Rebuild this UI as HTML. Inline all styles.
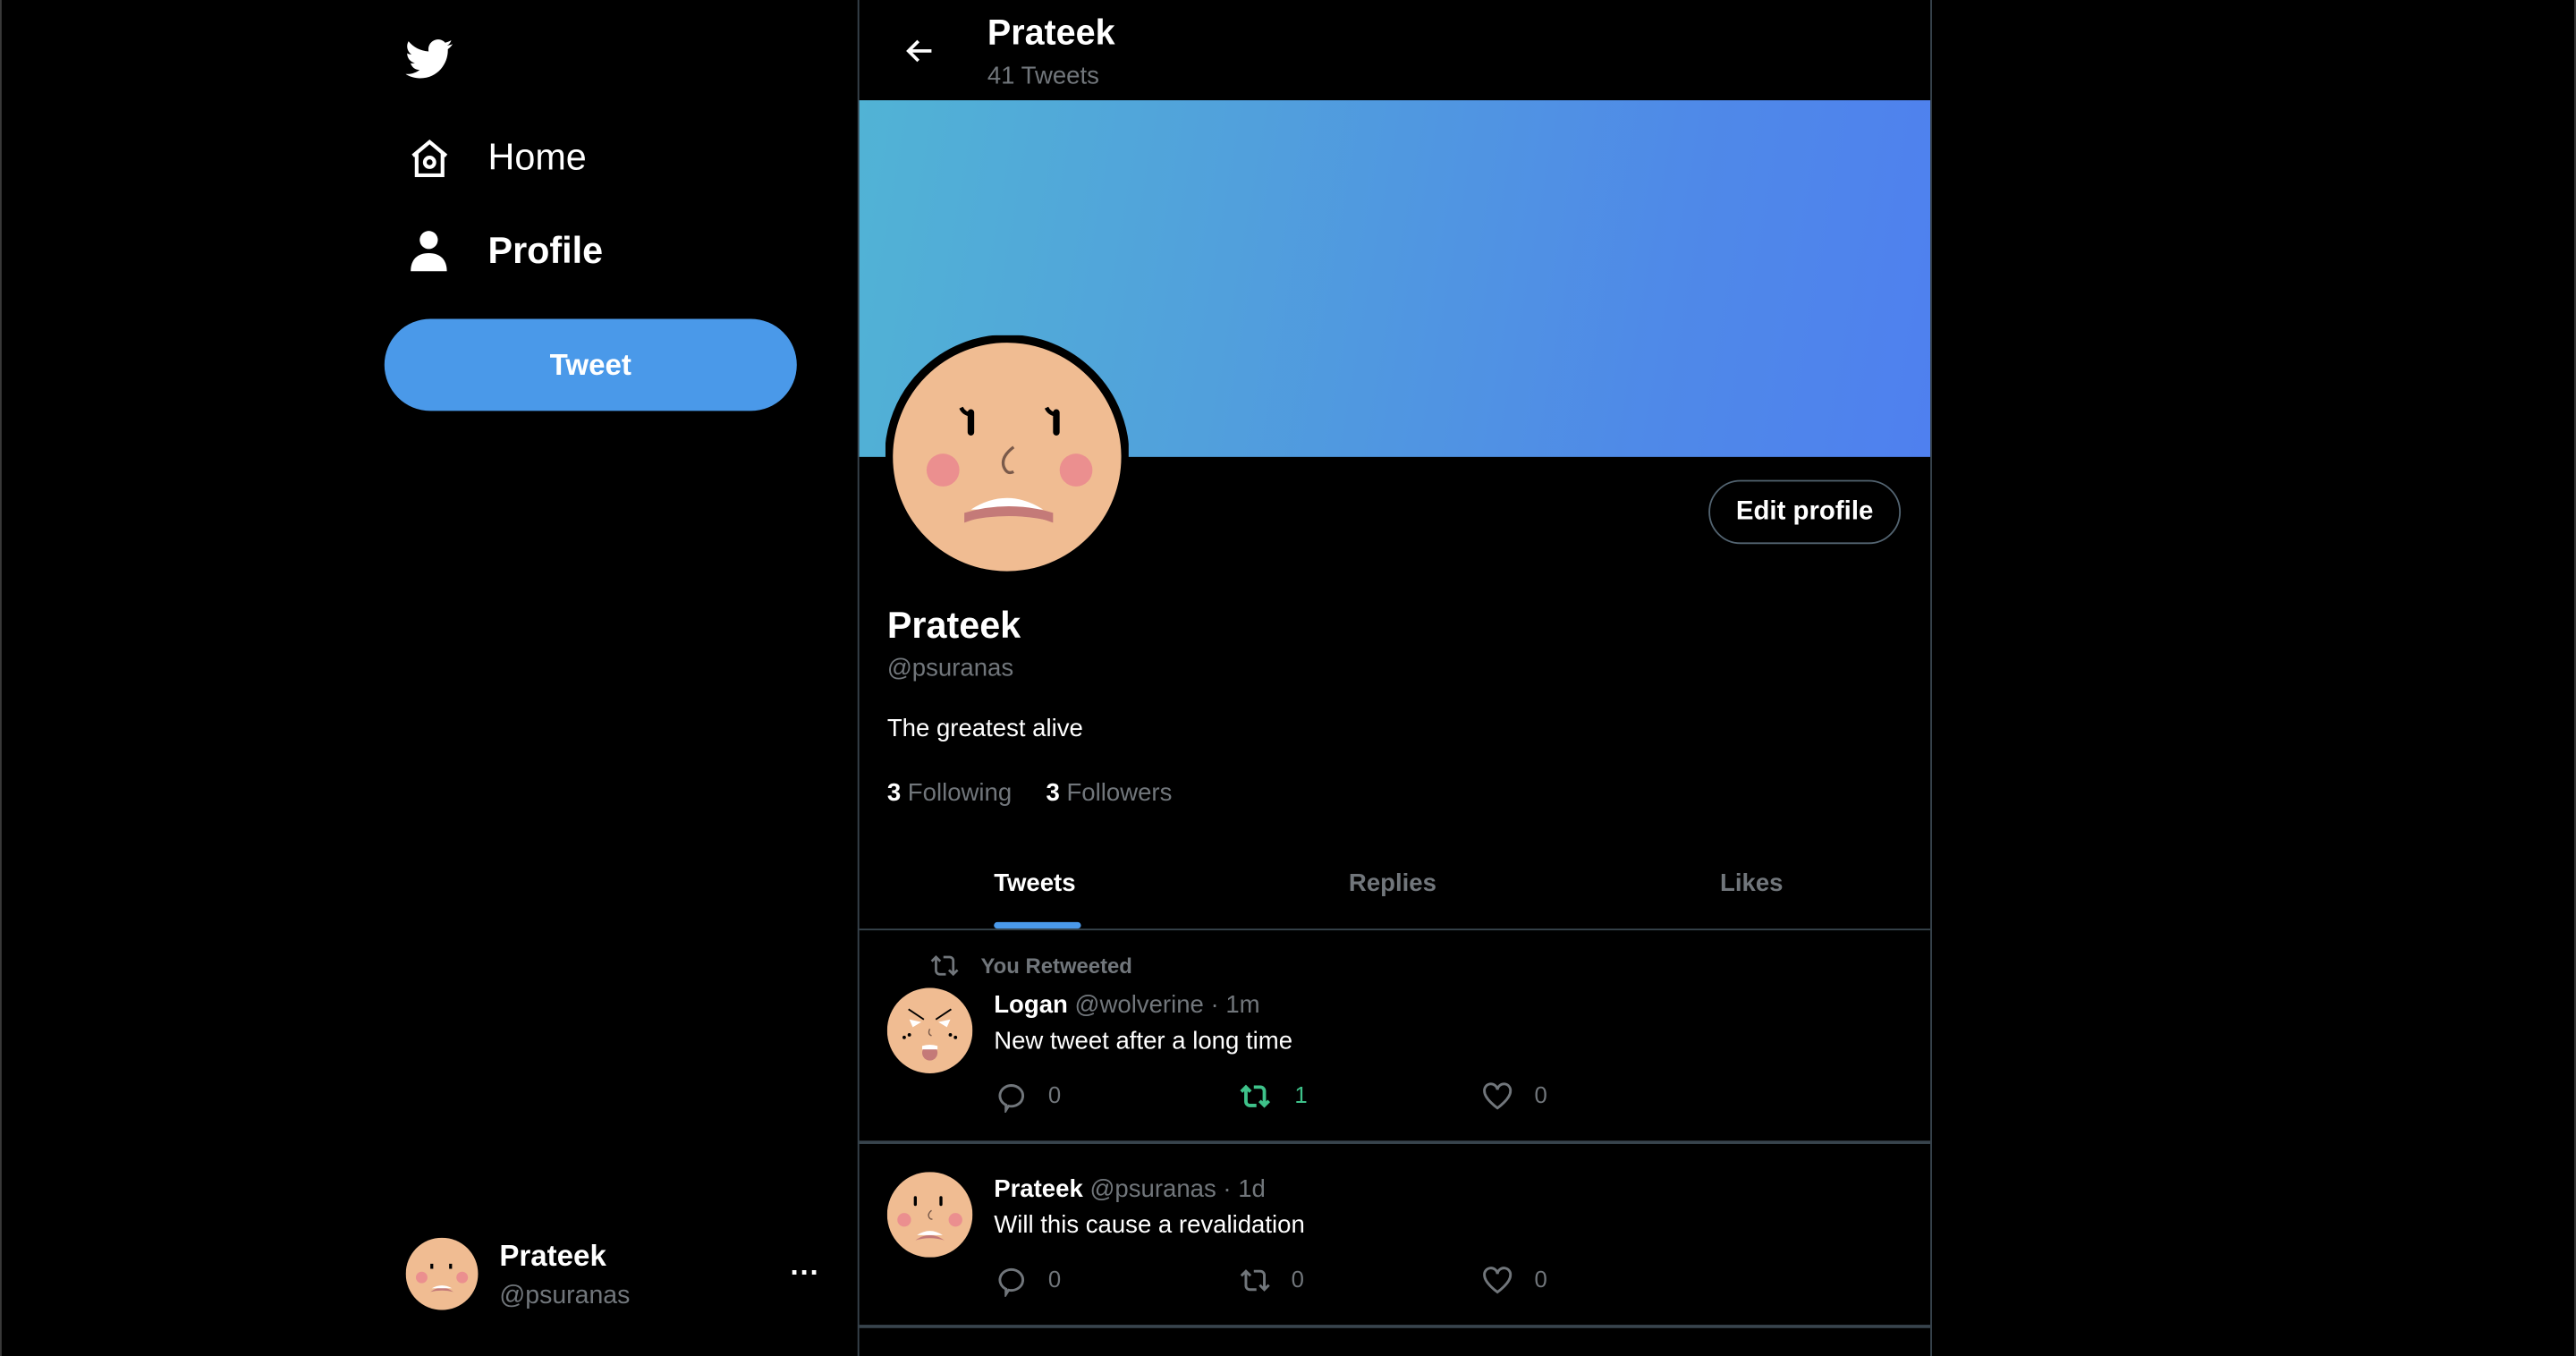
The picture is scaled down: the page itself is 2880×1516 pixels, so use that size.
<!DOCTYPE html>
<html><head><meta charset="utf-8"><style>
html,body{margin:0;padding:0;background:#000;width:2880px;height:1516px;overflow:hidden}
#w{position:absolute;left:0;top:0;width:1568px;height:825px;transform:scale(1.8367,1.8376);transform-origin:0 0;font-family:"Liberation Sans",sans-serif;color:#fff;background:#000}
.a{position:absolute;white-space:nowrap}
.g{color:#71767b}
.b{font-weight:bold}
.line{position:absolute;background:#2f3336}
</style></head><body><div id="w">
<div class="line" style="left:0;top:0;width:1px;height:825px;background:#3a3a3a"></div>
<div class="line" style="left:1567px;top:0;width:1px;height:825px;background:#3a3a3a"></div>
<div class="line" style="left:522px;top:0;width:1px;height:825px;background:#38444d"></div>
<div class="line" style="left:1175px;top:0;width:1px;height:825px;background:#38444d"></div>

<svg class="a" style="left:247px;top:23px" width="29" height="26" viewBox="0 0 24 20"><path fill="#fff" d="M23.6 2.4c-.9.4-1.8.6-2.8.8 1-.6 1.8-1.5 2.1-2.7-.9.6-2 1-3.1 1.2C19 .7 17.7.1 16.3.1c-2.7 0-4.9 2.2-4.9 4.9 0 .4 0 .8.1 1.1C7.4 5.9 3.8 4 1.4 1 1 1.7.7 2.6.7 3.5c0 1.7.9 3.2 2.2 4.1-.8 0-1.600-.2-2.2-.6v.1c0 2.4 1.7 4.4 3.9 4.8-.4.1-.8.2-1.3.2-.3 0-.6 0-.9-.1.6 2 2.4 3.4 4.6 3.4-1.7 1.300-3.8 2.100-6.100 2.100-.4 0-.8 0-1.2-.1 2.2 1.4 4.8 2.2 7.5 2.2 9.1 0 14-7.5 14-14v-.6c1-.7 1.8-1.6 2.4-2.6z"/></svg>
<svg class="a" style="left:248px;top:83px" width="27" height="27" viewBox="0 0 24 24" fill="none" stroke="#fff" stroke-width="2"><path d="M3 10.5L12 3l9 7.5M5 9v12h14V9"/><circle cx="12" cy="14" r="2.6"/></svg>
<div class="a" style="left:297px;top:83px;font-size:22.5px">Home</div>
<svg class="a" style="left:249px;top:140px" width="24" height="26" viewBox="0 0 24 26" fill="#fff"><circle cx="12" cy="6" r="5.5"/><path d="M1 25c0-7 4-11 11-11s11 4 11 11z"/></svg>
<div class="a b" style="left:297px;top:140px;font-size:22.5px">Profile</div>
<div class="a b" style="left:234px;top:194px;width:251px;height:56px;border-radius:28px;background:#4a99e9;font-size:18px;line-height:56px;text-align:center">Tweet</div>

<svg class="a" style="left:247px;top:753px" width="44" height="44" viewBox="0 0 100 100"><circle cx="50" cy="50" r="50" fill="#f0bc92"/><circle cx="22" cy="55" r="8" fill="#eb8f8f"/><circle cx="78" cy="55" r="8" fill="#eb8f8f"/><path d="M36 36v7M62 36v7" stroke="#000" stroke-width="4"/><path d="M34 75q16-12 32 0q-16-4-32 0" fill="#c47a78"/><path d="M36 70q14-8 28 0z" fill="#fff"/></svg>
<div class="a b" style="left:304px;top:754px;font-size:18px">Prateek</div>
<div class="a g" style="left:304px;top:780px;font-size:15.5px">@psuranas</div>
<div class="a b" style="left:481px;top:764px;font-size:18px">···</div>

<svg class="a" style="left:550px;top:21px" width="20" height="20" viewBox="0 0 20 20" fill="none" stroke="#fff" stroke-width="2"><path d="M17 10H3M9 4l-6 6 6 6"/></svg>
<div class="a b" style="left:601px;top:8px;font-size:21.5px">Prateek</div>
<div class="a g" style="left:601px;top:38px;font-size:15px">41 Tweets</div>
<div class="a" style="left:523px;top:61px;width:652px;height:217px;background:linear-gradient(100deg,#51b3d5 0%,#51a0dc 35%,#4f89e8 75%,#4f80ef 100%)"></div>

<svg class="a" style="left:539px;top:204px" width="148" height="148" viewBox="0 0 148 148"><circle cx="74" cy="74" r="72" fill="#f0bc92" stroke="#000" stroke-width="5"/><circle cx="35" cy="82" r="10" fill="#eb8f8f"/><circle cx="116" cy="82" r="10" fill="#eb8f8f"/><path d="M46 44q2 4 6 4M98 44q2 4 6 4" stroke="#000" stroke-width="2.5" fill="none"/><path d="M52 47v12M104 47v12" stroke="#000" stroke-width="4" stroke-linecap="round"/><path d="M78 68q-8 6-6 12q2 5 6 3" stroke="#7a5a4a" stroke-width="1.8" fill="none"/><path d="M49 113q26-18 52 0q-26-6-52 0z" fill="#c47a78"/><path d="M52 106q22-14 44 0z" fill="#fff"/><path d="M48 108q27-8 54 0v6q-27-10-54 0z" fill="#c47a78"/></svg>
<div class="a b" style="left:1040px;top:292px;width:115px;height:37px;border:1px solid #536471;border-radius:20px;font-size:16px;line-height:38px;text-align:center">Edit profile</div>

<div class="a b" style="left:540px;top:368px;font-size:22.5px">Prateek</div>
<div class="a g" style="left:540px;top:398px;font-size:15px">@psuranas</div>
<div class="a" style="left:540px;top:435px;font-size:15px">The greatest alive</div>
<div class="a" style="left:540px;top:474px;font-size:15px"><b>3</b> <span class="g">Following</span>&nbsp;&nbsp;&nbsp;&nbsp; <b>3</b> <span class="g">Followers</span></div>

<div class="a b" style="left:605px;top:529px;font-size:15px">Tweets</div>
<div class="a b g" style="left:821px;top:529px;font-size:15px">Replies</div>
<div class="a b g" style="left:1047px;top:529px;font-size:15px">Likes</div>
<div class="a" style="left:605px;top:561px;width:53px;height:4px;border-radius:2px;background:#4a99e9"></div>
<div class="line" style="left:523px;top:565px;width:652px;height:1px;background:#38444d"></div>

<svg class="a" style="left:566px;top:580px" width="18" height="15" viewBox="0 0 24 20" fill="none" stroke="#71767b" stroke-width="2"><path d="M5 3v11a3 3 0 0 0 3 3h5M1.5 6.5L5 3l3.5 3.5M11 3h5a3 3 0 0 1 3 3v11M15.5 13.5L19 17l3.5-3.5"/></svg>
<div class="a b g" style="left:597px;top:580px;font-size:13px">You Retweeted</div>
<svg class="a" style="left:540px;top:601px" width="52" height="52" viewBox="0 0 100 100"><circle cx="50" cy="50" r="50" fill="#f0bc92"/><path d="M25 25l18 12M75 25L57 37" stroke="#000" stroke-width="2"/><path d="M26 37l14 3-10 6zM74 37l-14 3 10 6z" fill="#fff"/><circle cx="20" cy="58" r="2" fill="#000"/><circle cx="26" cy="55" r="2" fill="#000"/><circle cx="74" cy="55" r="2" fill="#000"/><circle cx="80" cy="58" r="2" fill="#000"/><path d="M50 48q-3 6 2 8" stroke="#7a5a4a" stroke-width="1.5" fill="none"/><ellipse cx="50" cy="76" rx="9" ry="9" fill="#c47a78"/><path d="M41 72h18v-4q-9-3-18 0z" fill="#fff"/></svg>
<div class="a" style="left:605px;top:603px;font-size:15px"><b>Logan</b> <span class="g">@wolverine · 1m</span></div>
<div class="a" style="left:605px;top:625px;font-size:15px">New tweet after a long time</div>

<svg class="a" style="left:540px;top:713px" width="52" height="52" viewBox="0 0 100 100"><circle cx="50" cy="50" r="50" fill="#f0bc92"/><circle cx="20" cy="56" r="8" fill="#eb8f8f"/><circle cx="80" cy="56" r="8" fill="#eb8f8f"/><path d="M33 30v8M63 30v8" stroke="#000" stroke-width="3.5" stroke-linecap="round"/><path d="M52 45q-5 4-3 8q2 3 4 2" stroke="#7a5a4a" stroke-width="1.5" fill="none"/><path d="M33 80q17-12 34 0q-17-5-34 0z" fill="#c47a78"/><path d="M35 74q15-10 30 0z" fill="#fff"/></svg>
<div class="a" style="left:605px;top:715px;font-size:15px"><b>Prateek</b> <span class="g">@psuranas · 1d</span></div>
<div class="a" style="left:605px;top:737px;font-size:15px">Will this cause a revalidation</div>

<div class="a" style="left:606px;top:657px;width:400px;height:20px;font-size:14px">
<svg class="a" style="left:0;top:1px" width="19" height="19" viewBox="0 0 24 24" fill="none" stroke="#71767b" stroke-width="2"><path d="M12 3a9 8 0 1 1-2 15.8L8 22v-4A9 8 0 0 1 12 3z"/></svg><span class="a g" style="left:32px;top:1px">0</span>
<svg class="a" style="left:148px;top:2px" width="20" height="16" viewBox="0 0 24 20" fill="none" stroke="#3ec28a" stroke-width="2.6"><path d="M5 3v11a3 3 0 0 0 3 3h5M1.5 6.5L5 3l3.5 3.5M11 3h5a3 3 0 0 1 3 3v11M15.5 13.5L19 17l3.5-3.5"/></svg><span class="a" style="left:182px;top:1px;color:#3ec28a">1</span>
<svg class="a" style="left:296px;top:1px" width="19" height="18" viewBox="0 0 24 22" fill="none" stroke="#71767b" stroke-width="2"><path d="M12 20S2 13 2 7a5 5 0 0 1 10-1 5 5 0 0 1 10 1c0 6-10 13-10 13z"/></svg><span class="a g" style="left:328px;top:1px">0</span>
</div>
<div class="line" style="left:523px;top:694px;width:652px;height:2px;background:#38444d"></div>
<div class="a" style="left:606px;top:769px;width:400px;height:20px;font-size:14px">
<svg class="a" style="left:0;top:1px" width="19" height="19" viewBox="0 0 24 24" fill="none" stroke="#71767b" stroke-width="2"><path d="M12 3a9 8 0 1 1-2 15.8L8 22v-4A9 8 0 0 1 12 3z"/></svg><span class="a g" style="left:32px;top:1px">0</span>
<svg class="a" style="left:148px;top:2px" width="20" height="16" viewBox="0 0 24 20" fill="none" stroke="#71767b" stroke-width="2"><path d="M5 3v11a3 3 0 0 0 3 3h5M1.5 6.5L5 3l3.5 3.5M11 3h5a3 3 0 0 1 3 3v11M15.5 13.5L19 17l3.5-3.5"/></svg><span class="a g" style="left:180px;top:1px">0</span>
<svg class="a" style="left:296px;top:1px" width="19" height="18" viewBox="0 0 24 22" fill="none" stroke="#71767b" stroke-width="2"><path d="M12 20S2 13 2 7a5 5 0 0 1 10-1 5 5 0 0 1 10 1c0 6-10 13-10 13z"/></svg><span class="a g" style="left:328px;top:1px">0</span>
</div>
<div class="line" style="left:523px;top:806px;width:652px;height:2px;background:#38444d"></div>
</div></body></html>
